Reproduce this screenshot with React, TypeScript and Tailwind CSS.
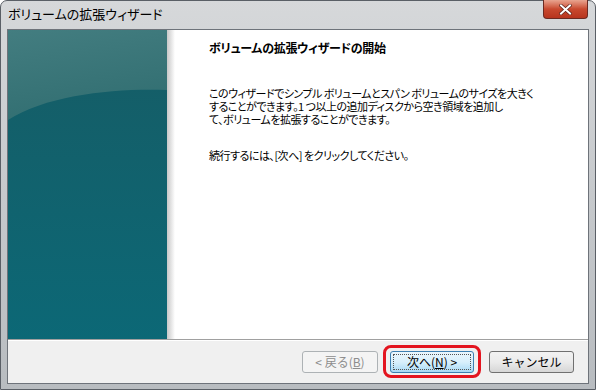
import React from "react";

const jp = { fontFamily: '"Noto Sans CJK JP", "Noto Sans", sans-serif' };

function SidePanel() {
  return (
    <svg width="159" height="310" viewBox="0 0 159 310" className="block">
      <defs>
        <linearGradient id="top" x1="0" y1="0" x2="0.3" y2="1">
          <stop offset="0" stopColor="#437d80" />
          <stop offset="1" stopColor="#326f72" />
        </linearGradient>
        <linearGradient id="bot" x1="0" y1="0" x2="0" y2="1">
          <stop offset="0" stopColor="#165c65" />
          <stop offset="1" stopColor="#0c6876" />
        </linearGradient>
      </defs>
      <rect width="159" height="310" fill="url(#bot)" />
      <path d="M0 0 H159 V60 C110 58 40 64 0 90 Z" fill="url(#top)" />
    </svg>
  );
}

function Btn({
  children,
  className = "",
}: {
  children: React.ReactNode;
  className?: string;
}) {
  return (
    <div
      className={`h-[22px] flex items-center justify-center rounded-[3px] text-[12px] whitespace-nowrap ${className}`}
      style={jp}
    >
      {children}
    </div>
  );
}

export default function App() {
  return (
    <div className="w-[596px] h-[390px] bg-white overflow-hidden">
      <div className="w-[596px] h-[390px] rounded-t-[7px] border border-[#5a5f66] bg-gradient-to-b from-[#d6d8da] via-[#c6c9cc] to-[#b8bcc0] flex flex-col relative">
        {/* title bar */}
        <div className="h-[28px] flex items-start">
          <div className="pl-[7px] pt-[4px] text-[13px] text-black leading-[18px] [font-feature-settings:'palt']" style={jp}>
            ボリュームの拡張ウィザード
          </div>
          <div className="ml-auto mr-[7px] w-[45px] h-[19px] rounded-b-[4px] border border-t-0 border-[#6b2a22] bg-gradient-to-b from-[#e8a490] via-[#c8492f] to-[#b7341e] flex items-center justify-center -mt-px">
            <svg width="13" height="11" viewBox="0 0 13 11">
              <path d="M2 1.5 L11 9.5 M11 1.5 L2 9.5" stroke="#5a2018" strokeWidth="3.4" strokeLinecap="square" />
              <path d="M2 1.5 L11 9.5 M11 1.5 L2 9.5" stroke="#ffffff" strokeWidth="2" strokeLinecap="square" />
            </svg>
          </div>
        </div>
        {/* client area */}
        <div className="mx-[6px] border border-[#6e737a] bg-[#f0f0f0] flex flex-col h-[355px]">
          <div className="flex h-[309px] bg-white">
            <div className="w-[159px] shrink-0 overflow-hidden">
              <SidePanel />
            </div>
            <div className="w-[8px] shrink-0 bg-gradient-to-r from-[#c8c8c8] to-white" />
            <div className="flex-1 pl-[34px] pt-[10px] text-black" style={jp}>
              <div className="font-bold text-[12px] leading-[16px] tracking-[-0.3px] [font-feature-settings:'palt']">
                ボリュームの拡張ウィザードの開始
              </div>
              <div className="mt-[31px] leading-[13px] text-[11px] tracking-[-0.5px] [font-feature-settings:'palt']">
                <div>このウィザードでシンプル ボリュームとスパン ボリュームのサイズを大きく</div>
                <div>することができます。1 つ以上の追加ディスクから空き領域を追加し</div>
                <div>て、ボリュームを拡張することができます。</div>
              </div>
              <div className="mt-[23px] leading-[13px] text-[11px] tracking-[-0.5px] [font-feature-settings:'palt']">
                続行するには、[次へ] をクリックしてください。
              </div>
            </div>
          </div>
          <div className="h-px bg-[#a0a0a0]" />
          <div className="h-px bg-white" />
          <div className="flex-1 flex items-start pt-[10px] pl-[294px]">
            <Btn className="w-[76px] border border-[#adb2b5] bg-[#f4f4f4] text-[#8d8d8d]">
              &lt; 戻る(<span className="underline">B</span>)
            </Btn>
            <div className="relative ml-[12px]">
              <div className="absolute -left-[7px] -top-[6px] w-[98px] h-[33px] rounded-[8px] border-[3px] border-[#e3141f]" />
              <Btn className="w-[84px] border border-[#3c7fb1] bg-gradient-to-b from-[#eaf6fd] via-[#d9f0fc] to-[#a7d9f5] text-black">
                <span className="border border-dotted border-[#555] w-[78px] h-[16px] flex items-center justify-center leading-[14px]">
                  次へ(<span className="underline">N</span>) &gt;
                </span>
              </Btn>
            </div>
            <Btn className="ml-[15px] w-[85px] border border-[#707070] bg-gradient-to-b from-[#f2f2f2] via-[#ebebeb] to-[#d6d6d6] text-black">
              キャンセル
            </Btn>
          </div>
        </div>
      </div>
    </div>
  );
}
